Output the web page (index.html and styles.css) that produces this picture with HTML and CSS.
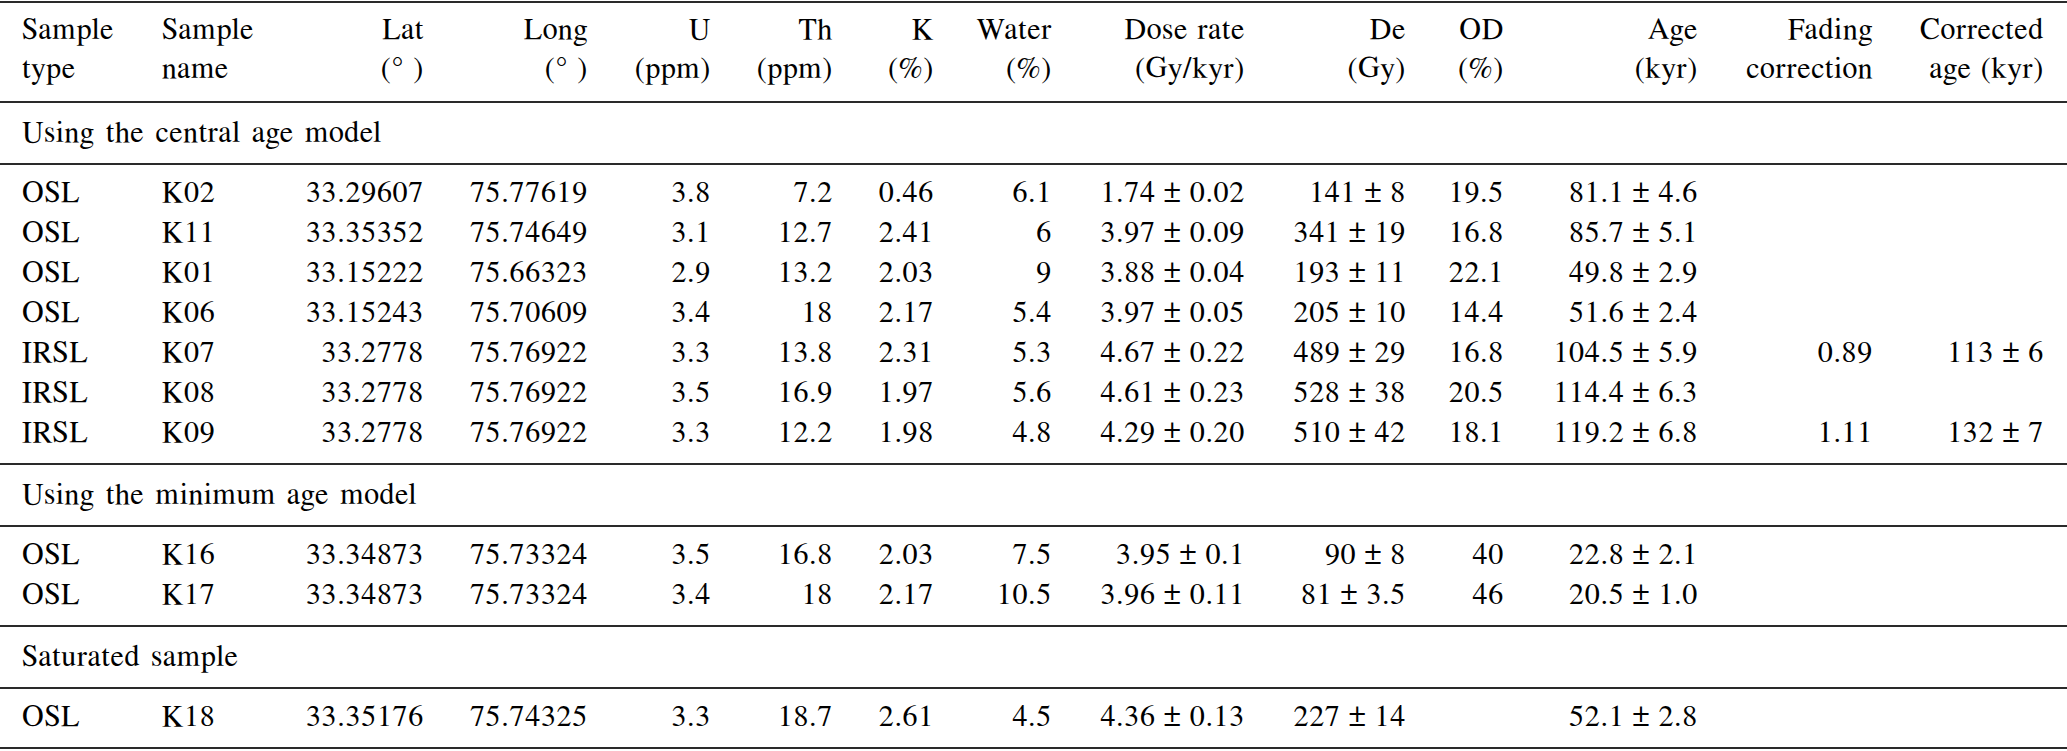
FILE: index.html
```html
<!DOCTYPE html>
<html lang="en">
<head>
<meta charset="utf-8">
<title>Luminescence ages</title>
<link rel="stylesheet" href="styles.css">
</head>
<body>
<table class="ages">
  <colgroup>
    <col class="w-type"><col class="w-name"><col class="w-lat"><col class="w-long">
    <col class="w-u"><col class="w-th"><col class="w-k"><col class="w-water">
    <col class="w-dose"><col class="w-de"><col class="w-od"><col class="w-age">
    <col class="w-fade"><col class="w-corr">
  </colgroup>
  <thead>
    <tr>
      <th class="l first">Sample<br>type</th>
      <th class="l">Sample<br>name</th>
      <th>Lat<br>(°&nbsp;)</th>
      <th>Long<br>(°&nbsp;)</th>
      <th>U<br>(ppm)</th>
      <th>Th<br>(ppm)</th>
      <th>K<br>(%)</th>
      <th>Water<br>(%)</th>
      <th>Dose rate<br>(Gy/kyr)</th>
      <th>De<br>(Gy)</th>
      <th>OD<br>(%)</th>
      <th>Age<br>(kyr)</th>
      <th>Fading<br>correction</th>
      <th class="last">Corrected<br>age (kyr)</th>
    </tr>
  </thead>
  <tbody class="label">
    <tr><td colspan="14">Using the central age model</td></tr>
  </tbody>
  <tbody class="block">
    <tr><td class="l first">OSL</td><td class="l">K02</td><td>33.29607</td><td>75.77619</td><td>3.8</td><td>7.2</td><td>0.46</td><td>6.1</td><td>1.74 ± 0.02</td><td>141 ± 8</td><td>19.5</td><td>81.1 ± 4.6</td><td></td><td class="last"></td></tr>
    <tr><td class="l first">OSL</td><td class="l">K11</td><td>33.35352</td><td>75.74649</td><td>3.1</td><td>12.7</td><td>2.41</td><td>6</td><td>3.97 ± 0.09</td><td>341 ± 19</td><td>16.8</td><td>85.7 ± 5.1</td><td></td><td class="last"></td></tr>
    <tr><td class="l first">OSL</td><td class="l">K01</td><td>33.15222</td><td>75.66323</td><td>2.9</td><td>13.2</td><td>2.03</td><td>9</td><td>3.88 ± 0.04</td><td>193 ± 11</td><td>22.1</td><td>49.8 ± 2.9</td><td></td><td class="last"></td></tr>
    <tr><td class="l first">OSL</td><td class="l">K06</td><td>33.15243</td><td>75.70609</td><td>3.4</td><td>18</td><td>2.17</td><td>5.4</td><td>3.97 ± 0.05</td><td>205 ± 10</td><td>14.4</td><td>51.6 ± 2.4</td><td></td><td class="last"></td></tr>
    <tr><td class="l first">IRSL</td><td class="l">K07</td><td>33.2778</td><td>75.76922</td><td>3.3</td><td>13.8</td><td>2.31</td><td>5.3</td><td>4.67 ± 0.22</td><td>489 ± 29</td><td>16.8</td><td>104.5 ± 5.9</td><td>0.89</td><td class="last">113 ± 6</td></tr>
    <tr><td class="l first">IRSL</td><td class="l">K08</td><td>33.2778</td><td>75.76922</td><td>3.5</td><td>16.9</td><td>1.97</td><td>5.6</td><td>4.61 ± 0.23</td><td>528 ± 38</td><td>20.5</td><td>114.4 ± 6.3</td><td></td><td class="last"></td></tr>
    <tr><td class="l first">IRSL</td><td class="l">K09</td><td>33.2778</td><td>75.76922</td><td>3.3</td><td>12.2</td><td>1.98</td><td>4.8</td><td>4.29 ± 0.20</td><td>510 ± 42</td><td>18.1</td><td>119.2 ± 6.8</td><td>1.11</td><td class="last">132 ± 7</td></tr>
  </tbody>
  <tbody class="label">
    <tr><td colspan="14">Using the minimum age model</td></tr>
  </tbody>
  <tbody class="block">
    <tr><td class="l first">OSL</td><td class="l">K16</td><td>33.34873</td><td>75.73324</td><td>3.5</td><td>16.8</td><td>2.03</td><td>7.5</td><td>3.95 ± 0.1</td><td>90 ± 8</td><td>40</td><td>22.8 ± 2.1</td><td></td><td class="last"></td></tr>
    <tr><td class="l first">OSL</td><td class="l">K17</td><td>33.34873</td><td>75.73324</td><td>3.4</td><td>18</td><td>2.17</td><td>10.5</td><td>3.96 ± 0.11</td><td>81 ± 3.5</td><td>46</td><td>20.5 ± 1.0</td><td></td><td class="last"></td></tr>
  </tbody>
  <tbody class="label">
    <tr><td colspan="14">Saturated sample</td></tr>
  </tbody>
  <tbody class="block">
    <tr><td class="l first">OSL</td><td class="l">K18</td><td>33.35176</td><td>75.74325</td><td>3.3</td><td>18.7</td><td>2.61</td><td>4.5</td><td>4.36 ± 0.13</td><td>227 ± 14</td><td></td><td>52.1 ± 2.8</td><td></td><td class="last"></td></tr>
  </tbody>
</table>
</body>
</html>
```

FILE: styles.css
```css
html, body {
  margin: 0;
  padding: 0;
  background: #ffffff;
}

body {
  font-family: FreeSerif, "Liberation Serif", serif;
  font-size: 30px;
  color: #000000;
}

.ages {
  width: 2067px;
  margin-top: 1px;
  table-layout: fixed;
  border-collapse: separate;
  border-spacing: 0;
}

.ages th,
.ages td {
  box-sizing: border-box;
  padding: 0;
  text-align: right;
  white-space: nowrap;
  font-family: FreeSerif, "Liberation Serif", serif;
  font-size: 30px;
  font-weight: normal;
  letter-spacing: 0.7px;
  word-spacing: 0;
  vertical-align: top;
}

.ages .l { text-align: left; }
.ages .first { padding-left: 22px; }
.ages .last { padding-right: 23px; }

.w-type  { width: 162px; }
.w-name  { width: 138px; }
.w-lat   { width: 124px; }
.w-long  { width: 164px; }
.w-u     { width: 123px; }
.w-th    { width: 122px; }
.w-k     { width: 101px; }
.w-water { width: 118px; }
.w-dose  { width: 193px; }
.w-de    { width: 161px; }
.w-od    { width: 98px; }
.w-age   { width: 194px; }
.w-fade  { width: 175px; }
.w-corr  { width: 194px; }

.ages thead th {
  line-height: 39px;
  padding-top: 8px;
  padding-bottom: 12px;
  word-spacing: 1px;
  border-top: 2px solid #2a2a2a;
  border-bottom: 2px solid #2a2a2a;
}

.ages .label td {
  text-align: left;
  line-height: 40px;
  padding: 10px 0 10px 22px;
  word-spacing: 3px;
  border-bottom: 2px solid #2a2a2a;
}

.ages .block td {
  line-height: 40px;
}

.ages .block tr:first-child td { padding-top: 8px; }
.ages .block tr:last-child td {
  padding-bottom: 10px;
  border-bottom: 2px solid #2a2a2a;
}
```
